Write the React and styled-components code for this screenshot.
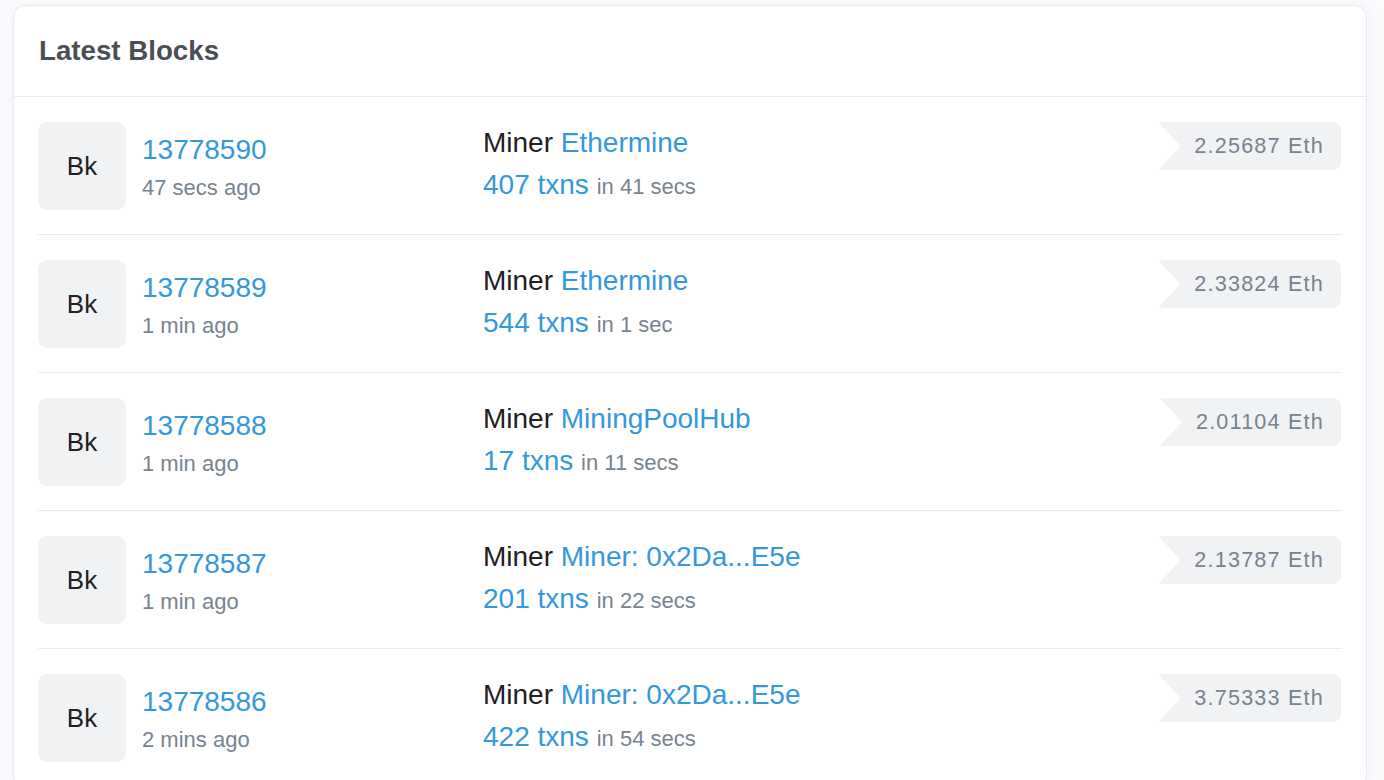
import React from "react";
import styled, { createGlobalStyle } from "styled-components";

const GlobalStyle = createGlobalStyle`
  html, body {
    margin: 0;
    padding: 0;
    background: #fafbfd;
    font-family: "Liberation Sans", Arial, Helvetica, sans-serif;
    -webkit-font-smoothing: antialiased;
  }
`;

const Page = styled.div`
  padding: 5px 17px 0 13px;
  height: 780px;
  overflow: hidden;
  box-sizing: border-box;
`;

const Card = styled.div`
  background: #ffffff;
  border: 1px solid #e7eaf3;
  border-radius: 13px;
  box-shadow: 0 0 12px rgba(189, 197, 209, 0.2);
`;

const CardHeader = styled.div`
  display: flex;
  align-items: center;
  height: 90px;
  padding: 0 25px;
  border-bottom: 1px solid #e7eaf3;
`;

const Title = styled.h2`
  margin: 0;
  font-size: 27.7px;
  font-weight: 700;
  color: #4a4f55;
`;

const CardBody = styled.div`
  padding: 0 24px;
`;

const Row = styled.div`
  display: grid;
  grid-template-columns: 445px 1fr auto;
  align-items: start;
  padding: 25px 0 24px;
  border-bottom: 1px solid #e7eaf3;
`;

const BlockCell = styled.div`
  display: flex;
  align-items: center;
  gap: 16px;
`;

const BkBox = styled.div`
  width: 88px;
  height: 88px;
  border-radius: 9px;
  background: #f1f2f4;
  color: #1e2022;
  font-size: 26px;
  display: flex;
  align-items: center;
  justify-content: center;
  flex-shrink: 0;
`;

const Stack = styled.div`
  display: flex;
  flex-direction: column;
`;

const Link = styled.a`
  color: #3498db;
  text-decoration: none;
  font-size: 28px;
  line-height: 42px;
`;

const Muted = styled.span`
  color: #77838f;
  font-size: 22px;
  line-height: 33px;
`;

const Line = styled.div`
  font-size: 28px;
  line-height: 42px;
  color: #1e2022;
  white-space: nowrap;
`;

const Reward = styled.span`
  display: inline-flex;
  align-items: center;
  height: 48px;
  margin-right: 1px;
  padding: 0 17px 0 36px;
  background: #f1f2f4;
  color: #77838f;
  font-size: 21.6px;
  letter-spacing: 1.2px;
  border-radius: 0 8px 8px 0;
  clip-path: polygon(0 0, 100% 0, 100% 100%, 0 100%, 22px 50%);
`;

const blocks = [
  { num: "13778590", ago: "47 secs ago", miner: "Ethermine", txns: 407, time: "41 secs", reward: "2.25687" },
  { num: "13778589", ago: "1 min ago", miner: "Ethermine", txns: 544, time: "1 sec", reward: "2.33824" },
  { num: "13778588", ago: "1 min ago", miner: "MiningPoolHub", txns: 17, time: "11 secs", reward: "2.01104" },
  { num: "13778587", ago: "1 min ago", miner: "Miner: 0x2Da...E5e", txns: 201, time: "22 secs", reward: "2.13787" },
  { num: "13778586", ago: "2 mins ago", miner: "Miner: 0x2Da...E5e", txns: 422, time: "54 secs", reward: "3.75333" },
];

const App = () => {
  return (
    <>
      <GlobalStyle />
      <Page>
        <Card>
          <CardHeader>
            <Title>Latest Blocks</Title>
          </CardHeader>
          <CardBody>
            {blocks.map((b) => (
              <Row key={b.num}>
                <BlockCell>
                  <BkBox>Bk</BkBox>
                  <Stack>
                    <Link href="#">{b.num}</Link>
                    <Muted>{b.ago}</Muted>
                  </Stack>
                </BlockCell>
                <Stack>
                  <Line>
                    Miner <Link href="#">{b.miner}</Link>
                  </Line>
                  <Line>
                    <Link href="#">{b.txns} txns</Link> <Muted>in {b.time}</Muted>
                  </Line>
                </Stack>
                <Reward>{b.reward} Eth</Reward>
              </Row>
            ))}
          </CardBody>
        </Card>
      </Page>
    </>
  );
};

export default App;
